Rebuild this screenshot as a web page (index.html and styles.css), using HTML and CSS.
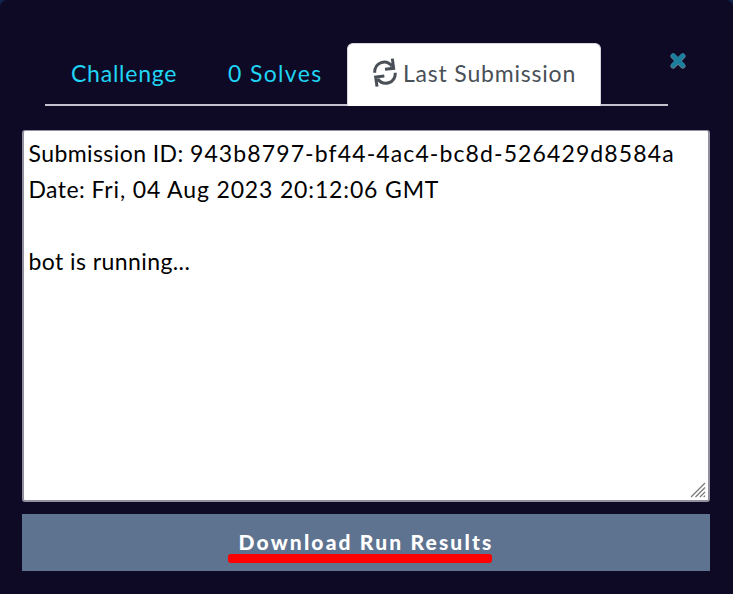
FILE: index.html
```html
<!DOCTYPE html>
<html lang="en">
<head>
<meta charset="utf-8">
<title>Last Submission</title>
<link rel="stylesheet" href="styles.css">
</head>
<body>
<main class="modal">
  <header class="head">
    <nav class="tabs">
      <a class="tab tab-challenge"><span>Challenge</span></a>
      <a class="tab tab-solves"><span>0 Solves</span></a>
      <a class="tab active">
        <svg class="sync" viewBox="0 0 78 96" fill="none" stroke="currentColor" stroke-width="9">
          <path d="M8 47C8 15 43 5 60 28M61 5l4 29-26 3"/>
          <path d="M70 47C70 79 35 89 17 66M15 89l-4-29 26-3"/>
        </svg>
        <span>Last Submission</span>
      </a>
    </nav>
    <svg class="close" viewBox="0 0 18 18"><path d="M4.2 4.2l9.6 9.6M13.8 4.2l-9.6 9.6" fill="none" stroke="#7d8196" stroke-width="5.4" stroke-linecap="round"/><path d="M4.2 3.8l9.6 9.6M13.8 3.8l-9.6 9.6" fill="none" stroke="#1b7e9c" stroke-width="4.8" stroke-linecap="round"/></svg>
  </header>
  <section class="output">
    <p><span class="key">Submission ID: </span><span class="hash">943b8797-bf44-4ac4-bc8d-526429d8584a</span></p>
    <p><span class="key">Date: </span><span class="date">Fri, 04 Aug 2023 20:12:06 GMT</span></p>
    <p>&nbsp;</p>
    <p class="key">bot is running...</p>
    <svg class="grip" viewBox="0 0 16 16"><path d="M1 15L15 1M5.5 15L15 5.5M10 15l5-5M13.7 15l1.3-1.3" fill="none" stroke="#777" stroke-width="1.2"/></svg>
  </section>
  <button class="download"><span class="label">Download Run Results</span></button>
</main>
</body>
</html>
```
FILE: styles.css
```css
* { box-sizing: border-box; }
body { margin: 0; background: #12264d; font-family: Lato, "Liberation Sans", sans-serif; }
.modal { height: 594px; padding: 42px 23px 0 22px; border-radius: 7px 7px 0 0; background: #0e0a26; }
.head { display: flex; height: 88px; padding-left: 23px; }
.tabs { display: flex; width: 623px; height: 64px; border-bottom: 2px solid #c5c2d0; }
.tab { display: flex; align-items: center; height: 63px; padding-bottom: 2px; font-size: 23px; line-height: 36px; white-space: nowrap; color: #20d5f5; }
.tab-challenge { width: 158px; padding-left: 26px; letter-spacing: 0.75px; }
.tab-solves { width: 144px; padding-left: 25px; letter-spacing: 1.35px; }
.active { width: 254px; height: 63px; margin: 1px 0 -2px; padding: 0 0 5px 24px; border: 1px solid #d5d7df; border-bottom: 0; border-radius: 6px 6px 0 0; background: #fff; color: #495057; letter-spacing: 0.8px; }
.sync { width: 26px; height: 32px; margin-right: 5px; flex: none; }
.close { width: 18px; height: 18px; margin: 10px 0 0 1px; }
.output { position: relative; height: 372px; padding: 4px 4.5px; border: 2px solid #9390a0; border-top-width: 1px; border-radius: 3px; background: #fff; color: #000; }
.output p { margin: 0; font-size: 23px; line-height: 36px; white-space: pre; }
.key { letter-spacing: 0.42px; }
.hash { letter-spacing: 1.11px; }
.date { letter-spacing: 0.85px; }
.grip { position: absolute; right: 2px; bottom: 2px; width: 16px; height: 16px; }
.download { display: block; width: 688px; height: 57px; margin-top: 12px; padding: 0 0 2px; border: 0; background: #5e7390; color: #fff; font: 900 21px/28px Lato, sans-serif; letter-spacing: 2.15px; }
.label { position: relative; white-space: nowrap; }
.label::after { content: ""; position: absolute; left: -11px; top: 25px; width: 264px; height: 9px; border-radius: 3px; background: #f00; }
```
